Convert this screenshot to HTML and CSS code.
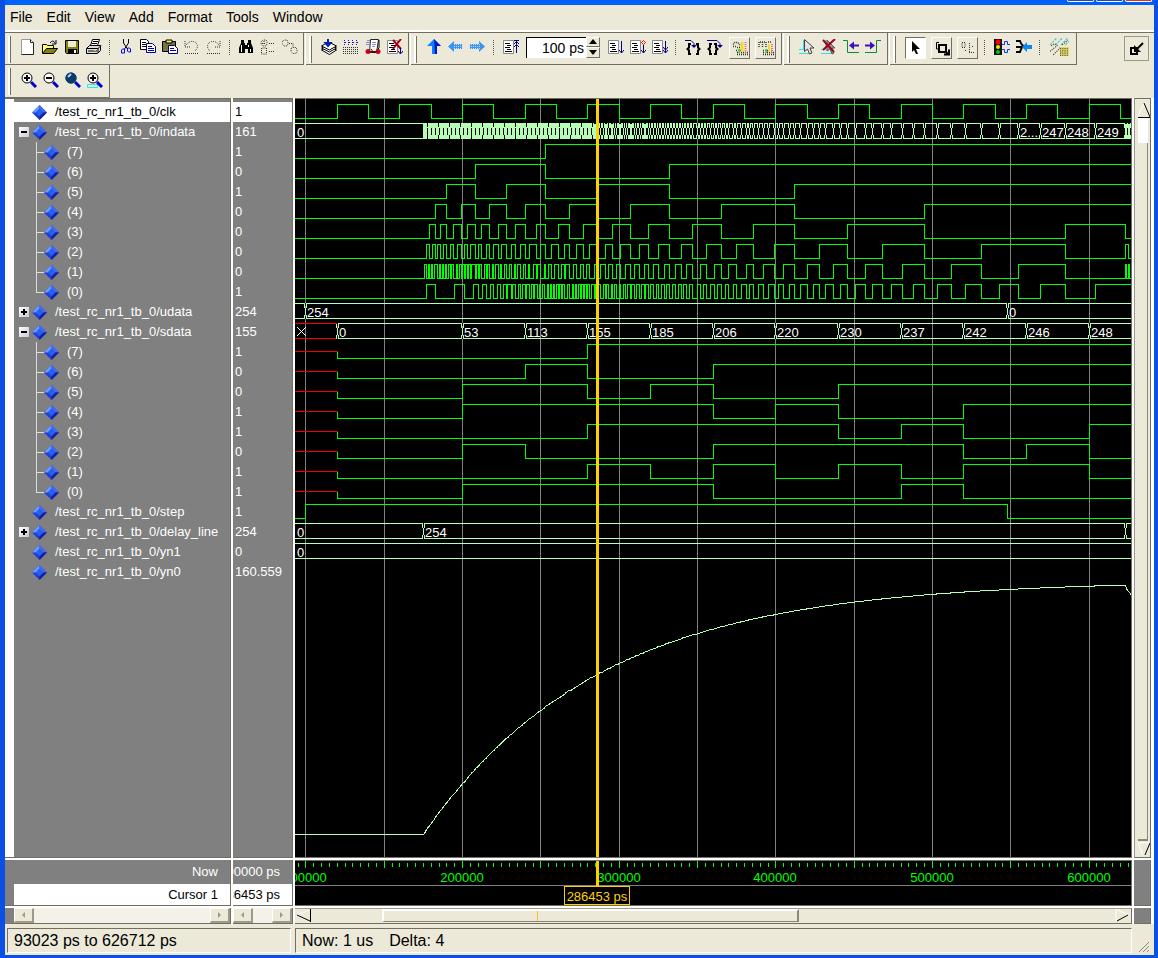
FILE: index.html
```html
<!DOCTYPE html>
<html lang="en">
<head>
<meta charset="utf-8">
<title>Wave</title>
<link rel="stylesheet" href="styles.css">
</head>
<body>
<svg class="defs" aria-hidden="true">
  <symbol id="diamond" viewBox="0 0 16 16"><path d="M8 0L16 8L8 16L0 8Z" fill="#1d3fd6"/><path d="M8 0L0 8L4 8L8 4Z" fill="#6d9cff"/><path d="M8 0L16 8L12 8L8 4Z" fill="#3f6cf4"/><path d="M8 16L16 8L12 8L8 12Z" fill="#1a1f96"/><path d="M8 4L12 8L8 12L4 8Z" fill="#2461f2"/></symbol>
  <symbol id="lens" viewBox="0 0 16 16"><path d="M10 10l5 5" stroke="#0000c8" stroke-width="3"/><circle cx="6" cy="6" r="5" fill="#fff" stroke="#000"/></symbol>
  <symbol id="sheet" viewBox="0 0 16 16"><path d="M.5 1.5h10v13h-10z" fill="#fff" stroke="#888"/><path d="M2 4.500h5M4 6.500h4M2 8.500h5M4 10.500h4M2 12.500h7" stroke="#000"/></symbol>
</svg>
<div class="window">
  <header class="caption"><i class="cap"></i><i class="cap"></i><i class="cap close"></i></header>
  <nav class="menu">
    <button>File</button><button>Edit</button><button>View</button><button>Add</button><button>Format</button><button>Tools</button><button>Window</button>
  </nav>
  <div class="bars">
    <div class="bar">
      <button class="tool" aria-label="New"><svg viewBox="0 0 16 16"><path d="M1.500.5h9l3 3v12h-12z" fill="#fff" stroke="#999"/><path d="M10.500.5v3h3v12h-12" fill="none" stroke="#222"/></svg></button>
      <button class="tool" aria-label="Open"><svg viewBox="0 0 16 16"><path d="M.5 14.500v-9h4l1 1h6v3" fill="#ffff80" stroke="#000"/><path d="M.5 14.500l4-5h11l-4 5z" fill="#848400" stroke="#000"/><path d="M8 4q3-4 5 0M14 1v4h-4" fill="none" stroke="#000"/></svg></button>
      <button class="tool" aria-label="Save"><svg viewBox="0 0 16 16"><path d="M1.500 1.500h13v13h-12l-1-1z" fill="#848400" stroke="#000"/><path d="M4 2h8v6H4z" fill="#ece9d8"/><path d="M4 10h9v5H4z" fill="#000"/><path d="M10 11h2v3h-2z" fill="#fff"/></svg></button>
      <button class="tool" aria-label="Print"><svg viewBox="0 0 16 16"><path d="M4.500 6.500l2-6h7l-2 6z" fill="#fff" stroke="#000"/><path d="M7 2.500h5M6 4.500h5" stroke="#000"/><path d="M.5 9.500l3-3h11v5l-3 3h-11z" fill="#ddd" stroke="#000"/><path d="M1 9.500h11l3-3M12 9v5M2 12h9" fill="none" stroke="#000"/><path d="M8 11h2v1H8z" fill="#dd0"/></svg></button>
      <span class="sep"></span>
      <button class="tool" aria-label="Cut"><svg viewBox="0 0 16 16"><path d="M5.500 0v4l4 6M10.500 0v4l-4 6" fill="none" stroke="#000"/><path d="M4.500 10h2v4h-3v-3zM9.500 9h2l1 1v3h-2l-1-1z" fill="none" stroke="#00f"/></svg></button>
      <button class="tool" aria-label="Copy"><svg viewBox="0 0 16 16"><path d="M.5.5h6l2 2v8h-8z" fill="#fff" stroke="#000"/><path d="M2 3.500h4M2 5.500h5M2 7.500h5" stroke="#000"/><path d="M6.500 4.500h6l3 3v6h-9z" fill="#fff" stroke="#00008a"/><path d="M8 7.500h4M8 9.500h6M8 11.500h6" stroke="#00008a"/></svg></button>
      <button class="tool" aria-label="Paste"><svg viewBox="0 0 16 16"><path d="M.5 2.500h13v10H.5z" fill="#77763a" stroke="#000"/><path d="M4 1h6v3H4z" fill="#f4ee50" stroke="#000"/><path d="M6.500 6.500h6l3 3v5h-9z" fill="#fff" stroke="#00008a"/><path d="M8 9.500h4M8 11.500h6" stroke="#00008a"/></svg></button>
      <button class="tool" aria-label="Undo" disabled><svg viewBox="0 0 16 16" class="dots"><path d="M1 2v6h5M2 6q4-5 9-3q5 4 0 9M1 14.500h14" fill="none"/></svg></button>
      <button class="tool" aria-label="Redo" disabled><svg viewBox="0 0 16 16" class="dots"><path d="M14 2v6H9M13 6Q9 1 4 3q-5 4 0 9M1 14.500h14" fill="none"/></svg></button>
      <span class="sep"></span>
      <button class="tool" aria-label="Find"><svg viewBox="0 0 16 16"><path d="M3 1h3v3h1v2h2V4h1V1h3v3l2 5v5h-5v-4H7v4H1V9l2-5z" fill="#000"/><path d="M3.500 6v7M10.500 6v2M12.500 10v3" stroke="#fff"/></svg></button>
      <button class="tool" aria-label="Expand" disabled><svg viewBox="0 0 16 16" class="dots"><path d="M1 3l2-2h3l1 2v2L6 7H3L1 5zM9 4.500h6M4 2v4M2 4.500h4M1.500 9v6h5V9zM9 12.500h6" fill="none"/></svg></button>
      <button class="tool" aria-label="Collapse" disabled><svg viewBox="0 0 16 16" class="dots"><path d="M0 3l2-2h3l1 2v2L5 7H2L0 5zM7 4.500h4v3M9 9.500l2-1h3l1 2v3l-2 1h-2l-2-2z" fill="none"/></svg></button>
    </div>
    <div class="bar">
      <button class="tool" aria-label="Compile"><svg viewBox="0 0 16 16"><path d="M.5 11l7-4 8 4-7 4.500z" fill="#fff" stroke="#000"/><path d="M.5 9l7-4 8 4-7 4z" fill="#fff" stroke="#000"/><path d="M.5 7l7-4 8 4-7 4z" fill="#fff" stroke="#000"/><path d="M7 0v5M4.500 4h5L7 7z" fill="#00c" stroke="#0020b0" stroke-width="2"/></svg></button>
      <button class="tool" aria-label="Compile all" disabled><svg viewBox="0 0 16 16"><path d="M1 1.500h14M1 5.500h14" stroke="#1818c0" stroke-dasharray="1 3"/><path d="M1 3.500h14" stroke="#1818c0" stroke-dasharray="2 2"/><path d="M0 8.500h16M0 10.500h16M0 12.500h16M0 14.500h16" stroke="#333" stroke-dasharray="1 1"/></svg></button>
      <button class="tool" aria-label="Simulate"><svg viewBox="0 0 16 16"><path d="M5.500.5h8l-2 13h-7z" fill="#fff" stroke="#222"/><path d="M2 1.500h3M1 3.500h4M1 5.500h4M7 3.500h4M7 5.500h4M7 7.500h3" stroke="#88c"/><path d="M14 1v8l-5 5-3-4" fill="none" stroke="#000"/><circle cx="3" cy="12.500" r="2.500" fill="#d00020"/><circle cx="13" cy="12.500" r="2.500" fill="#d00020"/><path d="M3 12.500h10" stroke="#900"/></svg></button>
      <button class="tool" aria-label="Break"><svg viewBox="0 0 16 16"><use href="#sheet"/><path d="M6 1l8 9M14 0L6 10" stroke="#a00018" stroke-width="2"/><path d="M13.500 9v5M11 12l2.500 3 2.500-3" fill="none" stroke="#00008a"/></svg></button>
    </div>
    <div class="bar roomy">
      <button class="tool" aria-label="Up"><svg viewBox="0 0 16 16"><path d="M8 0l7 7h-4v8H6V7H1z" fill="#0a80ff"/><path d="M8 0l7 7h-4v8H9z" fill="#0018c0"/></svg></button>
      <button class="tool" aria-label="Back"><svg viewBox="0 0 16 16"><path d="M0 7.500L6 2v3h8v5H6v3z" fill="#3f93f0"/><path d="M6 5.500h9M6 7.500h9M6 9.500h9" stroke="#bfe0ff" stroke-dasharray="1 1"/></svg></button>
      <button class="tool" aria-label="Forward"><svg viewBox="0 0 16 16"><path d="M15 7.500L9 2v3H0v5h9v3z" fill="#3f93f0"/><path d="M1 5.500h9M1 7.500h9M1 9.500h9" stroke="#bfe0ff" stroke-dasharray="1 1"/></svg></button>
      <span class="sep wide"></span>
      <button class="tool" aria-label="Restart"><svg viewBox="0 0 16 16"><use href="#sheet"/><path d="M13.500 1v13M11 1.500h5M11 5l2.500-2.500L16 5M11 8l2.500-2.500L16 8" fill="none" stroke="#00008a"/></svg></button>
      <div class="runlen"><input type="text" aria-label="Run length" value="100 ps"><div class="spin"><button aria-label="Increase"><i class="tri up"></i></button><button aria-label="Decrease"><i class="tri down"></i></button></div></div>
      <button class="tool" aria-label="Run"><svg viewBox="0 0 16 16"><use href="#sheet"/><path d="M13.500 2v12M11 11l2.500 3 2.500-3" fill="none" stroke="#00008a"/></svg></button>
      <button class="tool" aria-label="Continue"><svg viewBox="0 0 16 16"><use href="#sheet"/><path d="M13.500 6v8M11 11l2.500 3 2.500-3" fill="none" stroke="#00008a"/><path d="M13.500 1.500l2 2-2 2-2-2z" fill="none" stroke="#f00"/></svg></button>
      <button class="tool" aria-label="Run all"><svg viewBox="0 0 16 16"><use href="#sheet"/><path d="M13.500 2v12M11 8l2.500 3L16 8M11 11l2.500 3 2.500-3" fill="none" stroke="#00008a"/></svg></button>
      <span class="sep wide"></span>
      <button class="tool" aria-label="Step"><svg viewBox="0 0 16 16"><path d="M6 5H4v3.500L2.500 10 4 11.500V15h2M11 5h2v3.500l1.500 1.500-1.500 1.500V15h-2" fill="none" stroke="#000" stroke-width="2"/><path d="M0 1.500h6l3 3v3" fill="none" stroke="#00008a"/><path d="M6 6h6L9 9z" fill="#00008a"/></svg></button>
      <button class="tool" aria-label="Step over"><svg viewBox="0 0 16 16"><path d="M5 5H3v3.500L1.500 10 3 11.500V15h2M7 5h2v3.500l1.500 1.500L9 11.500V15H7" fill="none" stroke="#000" stroke-width="2"/><path d="M0 1.500h10l3 3v3" fill="none" stroke="#00008a"/><path d="M10 6h6l-3 3z" fill="#00008a"/></svg></button>
      <button class="tool raised" aria-label="Performance profiling"><svg viewBox="0 0 16 16"><path d="M1 4.500l2-2h3l2 3M1 6.500h3M5 7.500h3M4 10.500h5M5 12.500h11M5 14.500h11" fill="none" stroke="#333" stroke-dasharray="1 1" stroke-width="1.500"/><path d="M10 2v10" stroke="#eedc30" stroke-width="3"/><path d="M13.500 2v11" stroke="#e07a6a" stroke-width="2" stroke-dasharray="1 1"/><path d="M7 9v4" stroke="#5c5" stroke-width="2"/></svg></button>
      <button class="tool raised" aria-label="Memory profiling"><svg viewBox="0 0 16 16"><path d="M1 7V2h7v5M4.500 2v5M10 2h3M5 10.500h9M5 12.500h11M5 14.500h11" fill="none" stroke="#333" stroke-dasharray="1 1" stroke-width="1.500"/><path d="M11 4v8" stroke="#eedc30" stroke-width="2"/><path d="M14 4v9" stroke="#e07a6a" stroke-width="2" stroke-dasharray="1 1"/><path d="M8 9v4" stroke="#5c5" stroke-width="2"/></svg></button>
    </div>
    <div class="bar roomy">
      <button class="tool" aria-label="Insert cursor"><svg viewBox="0 0 16 16"><path d="M4.500 1v9M0 10.500h5M0 14.500h11v-4" fill="none" stroke="#30e0ee"/><path d="M5.500.5v12l3-2.500 2 5 2.500-1-2-5h4z" fill="#e4e4e4" stroke="#444"/></svg></button>
      <button class="tool" aria-label="Delete cursor"><svg viewBox="0 0 16 16"><path d="M4.500 1v9M0 10.500h5M0 14.500h11v-4" fill="none" stroke="#30e0ee"/><path d="M6 1v11l3-2 2 5 2-1-2-5h3z" fill="#999" stroke="#555"/><path d="M2 1l11 12M14 0L2 11" stroke="#a00020" stroke-width="2"/></svg></button>
      <button class="tool" aria-label="Previous transition"><svg viewBox="0 0 16 16"><path d="M0 1.500h4.500v12H16" fill="none" stroke="#0a8a3c"/><path d="M8 6.500h8" stroke="#3a10c0" stroke-width="2"/><path d="M6 6.500l5-4v8z" fill="#3a10c0"/></svg></button>
      <button class="tool" aria-label="Next transition"><svg viewBox="0 0 16 16"><path d="M0 13.500h11.500v-12H16" fill="none" stroke="#0a8a3c"/><path d="M0 6.500h8" stroke="#3a10c0" stroke-width="2"/><path d="M10 6.500l-5-4v8z" fill="#3a10c0"/></svg></button>
    </div>
    <div class="bar">
      <button class="tool pressed" aria-label="Select mode"><svg viewBox="0 0 16 16"><path d="M4 1l8 8H8l2 5H8L6 10l-2 2z" fill="#000"/></svg></button>
      <button class="tool raised" aria-label="Zoom mode"><svg viewBox="0 0 16 16"><path d="M5 2.500H2.500V9H4" fill="none" stroke="#000"/><path d="M5 5h7v7H5z" fill="none" stroke="#000" stroke-width="2"/><path d="M10 14.500h5v-5M11 11l4 4" fill="none" stroke="#000" stroke-width="2"/></svg></button>
      <button class="tool raised" aria-label="Pan mode" disabled><svg viewBox="0 0 16 16" class="dots"><path d="M2 2.500h3v5H2zM9.500 3v10M9 12.500h6M5 10.500h1M12 6.500h2" fill="none"/></svg></button>
      <span class="sep wide"></span>
      <button class="tool" aria-label="Stop drawing"><svg viewBox="0 0 16 16"><path d="M0 0h8v16H0z" fill="#111"/><circle cx="4" cy="3" r="2.500" fill="#f00"/><circle cx="4" cy="8" r="2" fill="#ee0"/><circle cx="4" cy="13" r="2" fill="#0c0"/><path d="M8 5.500h2.500v-3h3v3H16M8 10.500h2.500v3h3v-3H16" fill="none" stroke="#0a38ee"/></svg></button>
      <button class="tool" aria-label="Drivers"><svg viewBox="0 0 16 16"><path d="M0 2h4q2 5 4 5q-2 0-4 6H0M0 8h6" fill="none" stroke="#000" stroke-width="2"/><path d="M6 8l5-5v3h5v4h-5v3z" fill="#0a88f4"/></svg></button>
      <span class="sep wide"></span>
      <button class="tool large" aria-label="Show waves"><svg viewBox="0 0 18 18"><path d="M0 7L6 1M5 7l6-6M10 7l6-6M14 7l3-3" stroke="#38c4cc" stroke-dasharray="2 1"/><path d="M1 8l3-2 3 2M0 13l6-5M3 16l7-7M11 7l5-4" stroke="#333" fill="none" stroke-dasharray="1 1"/><path d="M9 9h8v8H9z" fill="#e6dc50"/><path d="M9 10.500h8M9 12.500h8M9 14.500h8M9 16.500h8" stroke="#555" stroke-dasharray="1 1"/></svg></button>
    </div>
    <button class="dock" aria-label="Dock"><svg viewBox="0 0 16 16"><path d="M2 7h6v6H2z" fill="none" stroke="#000" stroke-width="2"/><path d="M14 2L7 9" stroke="#000" stroke-width="2"/><path d="M5 4v7h7z" fill="#000"/></svg></button>
  </div>
  <div class="bars second">
    <div class="bar">
      <button class="tool" aria-label="Zoom in"><svg viewBox="0 0 16 16"><use href="#lens"/><path d="M3 6h6M6 3v6" stroke="#000" stroke-width="2"/></svg></button>
      <button class="tool" aria-label="Zoom out"><svg viewBox="0 0 16 16"><use href="#lens"/><path d="M3 6h6" stroke="#000" stroke-width="2"/></svg></button>
      <button class="tool" aria-label="Zoom full"><svg viewBox="0 0 16 16"><use href="#lens"/><circle cx="6" cy="6" r="5.500" fill="#083a6c"/><path d="M3 5l3-3" stroke="#b8d4ee" stroke-width="2"/></svg></button>
      <button class="tool" aria-label="Zoom on cursor"><svg viewBox="0 0 16 16"><path d="M.5 12.500h10v3H.5z" fill="none" stroke="#2ee"/><use href="#lens"/><path d="M3 6h6M6 3v6" stroke="#000" stroke-width="2"/></svg></button>
    </div>
  </div>
  <main class="wave">
    <section class="names"><ul id="names"></ul></section>
    <section class="values"><ul id="values"></ul></section>
    <section class="plot"><svg id="plot" role="img" aria-label="Waveforms"></svg></section>
    <div class="vscroll"><button aria-label="Scroll up"><svg viewBox="0 0 13 16"><path d="M6 1L0 14" stroke="#fff" fill="none"/><path d="M6 1l6 14M0 15.500h13" stroke="#000" fill="none"/></svg></button><div class="vtrack"><div class="vthumb"></div></div><button aria-label="Scroll down"><svg viewBox="0 0 13 16"><path d="M0 2l5 12M0 2h12" stroke="#fff" fill="none"/><path d="M12 2L7 14" stroke="#000" fill="none"/></svg></button></div>

    <section class="foot"><div class="now">Now</div><div class="cur">Cursor 1</div></section>
    <section class="foot vals"><div class="now">1000000 ps</div><div class="cur">286453 ps</div></section>
    <section class="plot"><svg id="ruler" role="img" aria-label="Time axis"></svg></section>
    <div class="filler"></div>

    <div class="hs inset"><button aria-label="Names left"><i class="tri left"></i></button><button aria-label="Names right"><i class="tri right"></i></button></div>
    <div class="hs"><button aria-label="Values left"><i class="tri left"></i></button><button aria-label="Values right"><i class="tri right"></i></button></div>
    <div class="hscroll"><button aria-label="Scroll left"><svg viewBox="0 0 16 13"><path d="M1 6L13 1" stroke="#fff" fill="none"/><path d="M1 6l13 6M14.500 0v13" stroke="#000" fill="none"/></svg></button><div class="htrack"><div class="hthumb"></div></div><button aria-label="Scroll right"><svg viewBox="0 0 16 13"><path d="M2 0v12M2 0l12 6" stroke="#fff" fill="none"/><path d="M14 6L3 12" stroke="#000" fill="none"/></svg></button></div>
    <div class="filler"></div>
  </main>
  <footer class="status"><div class="range">93023 ps to 626712 ps</div><div class="info"><span>Now: 1 us</span><span>Delta: 4</span></div><svg class="grip" viewBox="0 0 12 12"><path d="M1 11L11 1M5 11l6-6M9 11l2-2" stroke="#8a8778" stroke-width="1"/></svg></footer>
</div>
<script src="wave.js"></script>
</body>
</html>
```
FILE: styles.css
```css
* { box-sizing: border-box; }
body {
  margin: 0;
  font: 13px/20px "Liberation Sans", Arial, sans-serif;
  color: #000;
}
button, input { font: inherit; color: inherit; margin: 0; padding: 0; border: 0; border-radius: 0; background: none; }
svg { display: block; }
ul { list-style: none; margin: 0; padding: 0; }
.defs { display: none; }

.window {
  height: 100vh;
  min-height: 700px;
  display: flex;
  flex-direction: column;
  background: #ece9d8;
  border: solid #0a50e4;
  border-width: 0 4px 3px 5px;
  overflow: hidden;
}
.caption {
  height: 5px;
  flex: none;
  display: flex;
  justify-content: flex-end;
  gap: 2px;
  padding-right: 2px;
  background: #0062fa;
}
.cap { width: 27px; height: 2px; border: 1px solid #fff; border-top: 0; border-radius: 0 0 3px 3px; background: #1c49c8; }
.cap.close { background: #d03818; }

.menu {
  height: 27px;
  flex: none;
  display: flex;
  gap: 14px;
  align-items: flex-start;
  padding: 2px 5px;
  border-bottom: 2px solid #fff;
  font-size: 14px;
}

.bars {
  height: 33px;
  flex: none;
  display: flex;
  gap: 2px;
  border-top: 1px solid #716f64;
}
.bars.second { border-top: 0; }
.bar {
  display: flex;
  align-items: center;
  padding: 0 2px 3px 12px;
  border: solid #716f64;
  border-width: 0 1px 1px 0;
  background: linear-gradient(#716f64, #716f64) 5px 3px / 1px 27px no-repeat, linear-gradient(#fff, #fff) 3px 3px / 2px 27px no-repeat;
  box-shadow: -1px 0 #fff;
}
.bar.roomy { padding-right: 3px; }
.second .bar { padding: 0 3px 3px 13px; }
.tool { width: 22px; height: 22px; flex: none; display: grid; place-items: center; }
.tool svg { width: 16px; height: 16px; }
.tool.large svg { width: 20px; height: 20px; }
.tool.large { width: 28px; }
.tool.raised, .tool.pressed { width: 21px; margin: 2px 2px 0 3px; border: 1px solid #fff; }
.tool.raised { border-right-color: #716f64; border-bottom-color: #716f64; }
.tool.pressed { background: #fff; border-left-color: #716f64; border-top-color: #716f64; }
.dots { stroke: #33312a; stroke-dasharray: 1 1; }
.sep { width: 10px; height: 15px; flex: none; background: repeating-linear-gradient(#55534a 0 1px, transparent 1px 2px) 4px 0 / 1px 15px no-repeat; }
.sep.wide { width: 11px; }
.runlen { display: flex; width: 74px; height: 21px; margin: 0 5px 0 4px; }
.runlen input {
  width: 60px;
  font-size: 14px;
  text-align: right;
  padding-right: 2px;
  background: #fff;
  border: solid #000;
  border-width: 1px 0 0 1px;
}
.spin { display: grid; width: 14px; }
.spin button { display: grid; place-items: center; border: 1px solid #fff; border-right-color: #716f64; border-bottom-color: #716f64; }
.tri { width: 0; height: 0; border: 4px solid transparent; }
.tri.up { border-top: 0; border-bottom: 5px solid #000; }
.tri.down { border-bottom: 0; border-top: 5px solid #000; }
.tri.left { border-width: 3px; border-left: 0; border-right-color: #9d9a8b; }
.tri.right { border-width: 3px; border-right: 0; border-left-color: #9d9a8b; }
.dock { width: 25px; height: 25px; margin: 3px 5px 0 auto; display: grid; place-items: center; border: 1px solid #9d9a8b; }
.dock svg { width: 16px; height: 16px; }

.wave {
  flex: 1;
  min-height: 0;
  display: grid;
  grid-template: minmax(0, 1fr) 46px 16px / 226px 60px minmax(0, 1fr) 17px;
  gap: 2px;
  padding-right: 3px;
  background: #fff;
}
.wave > * { border: solid #716f64; border-width: 0 1px 1px 0; min-width: 0; overflow: hidden; }
.names, .values { background: #808080; border-top: 1px solid #716f64; color: #fff; padding-top: 3px; }
.names { padding-left: 9px; background: linear-gradient(to right, #fff 9px, #808080 9px); }
.row { height: 20px; display: flex; align-items: center; padding-left: 5px; white-space: nowrap; }
.row.sel { background: #fff; color: #000; }
.row > svg { width: 15px; height: 15px; margin-right: 8px; flex: none; }
.toggle { width: 10px; height: 10px; margin-right: 3px; background: linear-gradient(to bottom right, #fff, #c8c8d8); position: relative; flex: none; }
.toggle::before, .toggle.plus::after { content: ""; position: absolute; left: 2px; top: 4px; width: 6px; height: 2px; background: #000; }
.toggle.plus::after { left: 4px; top: 2px; width: 2px; height: 6px; }
.toggle.none { visibility: hidden; }
.bit { padding-left: 22px; }
.bit::before { content: ""; width: 8px; height: 20px; background: linear-gradient(#ddd, #ddd) 0 0 / 1px 100% no-repeat, linear-gradient(#ddd, #ddd) 0 10px / 8px 1px no-repeat; }
.bit.last::before { background-size: 1px 10px, 8px 1px; }
.values .row { padding-left: 2px; }

.plot { background: #000; border-top: 1px solid #716f64; }
.plot svg { width: 100%; height: 100%; shape-rendering: crispEdges; font-size: 13px; }
.foot { background: #808080; color: #fff; display: grid; grid-template-rows: 24px 1fr; padding-left: 9px; }
.foot.vals { padding-left: 0; }
.foot div { display: flex; justify-content: flex-end; align-items: center; padding-right: 12px; white-space: nowrap; overflow: hidden; }
.foot .cur { background: #fff; color: #000; }
.filler { background: #808080; }

.hs { display: flex; justify-content: space-between; background: #f4f2e8; }
.hs.inset { border-left: 9px solid #808080; }
.hs button { width: 20px; display: grid; place-items: center; background: #ece9d8; border: 1px solid #fff; border-right: 2px solid #9d9a8b; border-bottom: 2px solid #9d9a8b; }
.hscroll { display: flex; padding: 0 1px; background: #ece9d8; border-top: 1px solid #9d9a8b; }
.hscroll button, .hscroll svg { width: 16px; height: 13px; }
.htrack { flex: 1; padding-left: 8.4%; }
.hthumb { width: 57%; height: 13px; border: 2px solid #fff; border-right-color: #8a8778; border-bottom: 1px solid #8a8778; background: linear-gradient(#f0c818, #f0c818) 37% 0 / 1px 100% no-repeat; }
.wave .vscroll { display: flex; flex-direction: column; padding: 3px 2px 0 3px; background: #ece9d8; border-top: 1px solid #716f64; border-left: 1px solid #9d9a8b; }
.vscroll button, .vscroll svg { width: 13px; height: 16px; }
.vtrack { flex: 1; background: #fff; padding-top: 25px; }
.vthumb { height: 100%; background: #ece9d8; border: solid #8a8778; border-width: 0 1px 2px 0; }

.status { height: 31px; flex: none; display: flex; gap: 4px; padding: 4px 4px 2px 2px; font-size: 16px; }
.status div { border: 1px solid #fff; border-top-color: #716f64; border-left-color: #716f64; padding: 2px 6px; white-space: nowrap; }
.range { width: 284px; }
.info { flex: 1; display: flex; gap: 16px; }
.grip { width: 12px; height: 12px; margin-left: 2px; align-self: flex-end; }
```
FILE: wave.js
```javascript
const T0 = 93023, PS_PER_PX = 638.4, ROW = 20;
const END = 2400;
const px = t => Math.floor((t - T0) / PS_PER_PX);
const NS = "http://www.w3.org/2000/svg";
const GREEN = "#00ff00", PALE = "#b4ffb4";

function add(svg, tag, attrs, text) {
  const el = document.createElementNS(NS, tag);
  for (const k in attrs) el.setAttribute(k, attrs[k]);
  if (text !== undefined) el.textContent = text;
  svg.appendChild(el);
}
const stroke = (svg, d, color) => add(svg, "path", { d, stroke: color, fill: "none" });

// Sampled RC charge, one sample each nanosecond, then the discharge.
const charge = n => n < 30
  ? 254 * (1 - Math.exp(-0.00885 * n)) + 0.24
  : 254 * (1 - Math.exp(-0.00895 * n));
const indata = [[T0, 0]];
for (let n = 0; n < 455; n++) {
  const v = Math.round(n < 448 ? charge(n) : charge(448) - 2.2 * (n - 447));
  if (v !== indata[indata.length - 1][1]) indata.push([175000 + n * 1000, v]);
}
const levels = [0, 53, 113, 155, 185, 206, 220, 230, 237, 242, 246, 248];
const sdata = levels.map((v, i) => [120000 + (i ? (i + 1) * 40000 : 0), v]);
const clk = [[T0, 0]];
for (let t = 120000; t < 1500000; t += 20000) clk.push([t, (t / 20000) % 2 ? 0 : 1]);

const signals = [
  { name: "clk", value: "1", wave: clk, sel: true },
  { name: "indata", value: "161", bus: indata, open: true, bits: true },
  { name: "udata", value: "254", bus: [[T0, ""], [100000, 254], [548000, 0]], plus: true },
  { name: "sdata", value: "155", bus: sdata, open: true, bits: true, unknown: 120000 },
  { name: "step", value: "1", wave: [[T0, 0], [100000, 1], [548000, 0]] },
  { name: "delay_line", value: "254", bus: [[T0, 0], [175000, 254], [623000, ""]], plus: true },
  { name: "yn1", value: "0", bus: [[T0, 0]] },
  { name: "yn0", value: "160.559" }
];

const plot = document.getElementById("plot");
const names = document.getElementById("names");
const values = document.getElementById("values");

for (let t = 100000; t < 1500000; t += 50000)
  stroke(plot, `M${px(t) + 0.5} 0V3000`, "#808080");

function digital(list, mid, unknown) {
  const hi = mid - 7.5, lo = mid + 6.5;
  let d = "";
  if (unknown) {
    const x = px(unknown) + 0.5;
    stroke(plot, `M0 ${mid - 0.5}H${x}`, "#f00000");
    d = `M${x} ${mid - 0.5}`;
  }
  list.forEach(([t, v], i) => {
    const y = v ? hi : lo;
    d += (i || unknown ? `H${px(t) + 0.5}V` : "M0 ") + y;
  });
  stroke(plot, d + `H${END}`, GREEN);
}

function bus(list, mid, unknown) {
  const top = mid - 8.5, bot = mid + 6.5;
  stroke(plot, `M${unknown ? px(unknown) : 0} ${top}H${END}M${unknown ? px(unknown) : 0} ${bot}H${END}`, PALE);
  if (unknown) {
    stroke(plot, `M0 ${top}H${px(unknown)}V${bot}H0`, "#ff0000");
    stroke(plot, `M2 ${mid - 5}l9 9M11 ${mid - 5}l-9 9`, "#ffffff");
  }
  let d = "", gaps = "";
  list.forEach(([t, v], i) => {
    const x = px(t) + 0.5;
    if (i || unknown) {
      gaps += `M${x} ${top - 0.5}v3M${x} ${bot + 0.5}v-3`;
      d += `M${x - 1} ${top}v4M${x + 1} ${top}v4M${x} ${top + 4}V${bot - 4}M${x - 1} ${bot}v-4M${x + 1} ${bot}v-4`;
    }
    const next = i + 1 < list.length ? px(list[i + 1][0]) : 836;
    const room = next - x;
    if (v !== "" && room > 20) {
      const label = room < 24 ? "2..." : v;
      add(plot, "text", { x: Math.round(x + 1), y: mid + 5, fill: "#ffffff" }, label);
    }
  });
  stroke(plot, gaps, "#000000");
  stroke(plot, d, PALE);
}

function dense(x, end, mid) {
  add(plot, "rect", { x, y: mid - 9, width: end - x, height: 16, fill: PALE });
  let d = "";
  for (let g = x + 4; g < end; g += 4) d += `M${g + 0.5} ${mid - 4}v7`;
  for (let g = x + 4; g < end; g += 11) d += `M${g + 0.5} ${mid - 9}v4M${g + 0.5} ${mid + 7}v-4`;
  stroke(plot, d, "#000000");
}

function addRow(cls, label, value, toggle) {
  const icon = '<svg><use href="#diamond"/></svg>';
  names.insertAdjacentHTML("beforeend", `<li class="row ${cls}">${toggle}${icon}<span>${label}</span></li>`);
  values.insertAdjacentHTML("beforeend", `<li class="row ${cls === "sel" ? "sel" : ""}">${value}</li>`);
}

let mid = 13;
for (const s of signals) {
  const kind = s.plus ? "plus" : s.open ? "" : "none";
  addRow(s.sel ? "sel" : "", `/test_rc_nr1_tb_0/${s.name}`, s.value, `<i class="toggle ${kind}"></i>`);
  if (s.wave) digital(s.wave, mid);
  if (s.bus) bus(s.bus, mid, s.unknown);
  if (s.bus === indata) dense(px(175000), px(284000), mid);
  mid += ROW;
  if (s.bits) for (let b = 7; b >= 0; b--) {
    addRow(b ? "bit" : "bit last", `(${b})`, (s.value >> b) & 1, "");
    digital(s.bus.map(([t, v]) => [t, (v >> b) & 1]), mid, s.unknown);
    mid += ROW;
  }
}

// Analog trace of yn0, one pixel for each unit.
const base = 735.5;
let curve = `M0 ${base}`, last = 0;
for (let n = 0; n <= 448; n++) {
  last = Math.round(charge(n));
  curve += `L${(175000 + n * 1000 - T0) / PS_PER_PX} ${base - last}`;
}
curve += `L832 ${base - last + 4}L836 ${base - last + 9}`;
stroke(plot, curve, PALE);

const cursorX = px(286453) - 1;
add(plot, "rect", { x: cursorX, y: 0, width: 3, height: 3000, fill: "#ffd000" });

const ruler = document.getElementById("ruler");
for (let t = 95000; t < 1500000; t += 5000) {
  const major = t % 50000 === 0;
  stroke(ruler, `M${px(t) + 0.5} ${major ? 0 : 2}V${major ? 7 : 6}`, GREEN);
  if (t % 100000 === 0)
    add(ruler, "text", { x: px(t), y: 21, fill: GREEN, "text-anchor": "middle" }, t);
}
stroke(ruler, `M0 24.500H${END}`, "#808080");
add(ruler, "rect", { x: cursorX, y: 0, width: 3, height: 26, fill: "#ffd000" });
add(ruler, "rect", { x: cursorX - 31.5, y: 25.5, width: 65, height: 18, fill: "#000000", stroke: "#ffd000" });
add(ruler, "text", { x: cursorX + 1, y: 40, fill: "#ffd000", "text-anchor": "middle" }, "286453 ps");
```
